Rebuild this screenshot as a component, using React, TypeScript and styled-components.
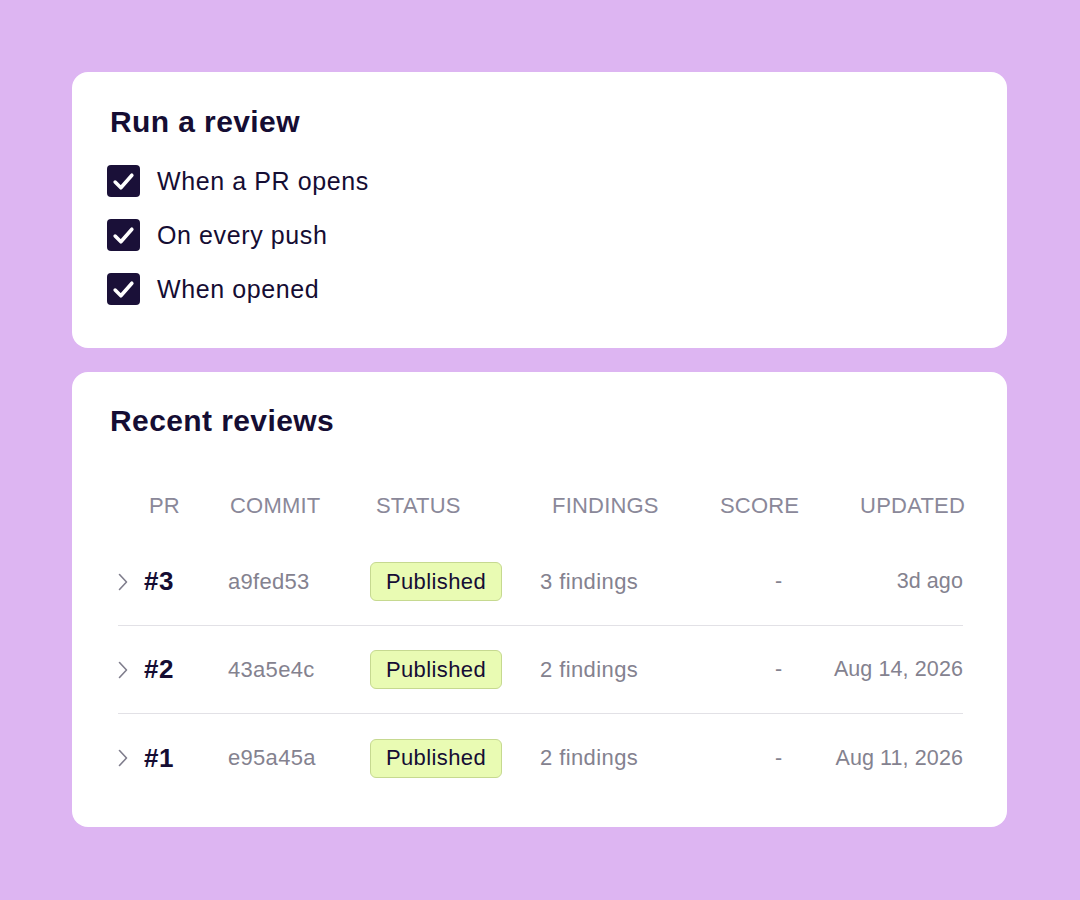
import React from "react";
import styled, { createGlobalStyle } from "styled-components";

const Global = createGlobalStyle`
  html, body { margin: 0; padding: 0; }
  body {
    background: #ddb5f2;
    font-family: "Liberation Sans", Arial, sans-serif;
    color: #150d33;
    -webkit-font-smoothing: antialiased;
  }
`;

const Page = styled.div`
  display: flex;
  flex-direction: column;
  gap: 24px;
  padding: 72px 73px 72px 72px;
  width: 1080px;
  height: 900px;
  box-sizing: border-box;
`;

const Card = styled.section<{ $h: number; $pt: number }>`
  background: #ffffff;
  border-radius: 16px;
  height: ${(p) => p.$h}px;
  box-sizing: border-box;
  padding: ${(p) => p.$pt}px 38px 0 38px;
  display: flex;
  flex-direction: column;
`;

const Title = styled.h2`
  margin: 0;
  font-size: 30px;
  line-height: 36px;
  font-weight: 700;
  letter-spacing: 0.4px;
  color: #150d33;
`;

const CheckList = styled.div`
  display: flex;
  flex-direction: column;
  gap: 22px;
  margin-top: 25px;
`;

const CheckRow = styled.label`
  display: flex;
  align-items: center;
  gap: 17px;
  margin-left: -3px;
  font-size: 25px;
  line-height: 32px;
  letter-spacing: 0.6px;
  color: #150d33;
`;

const Box = styled.span`
  width: 33px;
  height: 32px;
  border-radius: 4px;
  background: #1a1038;
  display: flex;
  align-items: center;
  justify-content: center;
  flex: none;
`;

const Table = styled.div`
  margin: 51px 6px 0 8px;
  display: flex;
  flex-direction: column;
`;

const cols = "110px 142px 170px 178px 100px 1fr";

const HeadRow = styled.div`
  display: grid;
  grid-template-columns: ${cols};
  height: 48px;
  align-items: start;
`;

const Th = styled.div<{ $pl?: number; $right?: boolean }>`
  padding-left: ${(p) => p.$pl ?? 0}px;
  text-align: ${(p) => (p.$right ? "right" : "left")};
  margin-right: ${(p) => (p.$right ? -2 : 0)}px;
  font-size: 22px;
  line-height: 32px;
  letter-spacing: 0.2px;
  color: #8a8899;
  white-space: nowrap;
`;

const Row = styled.div<{ $last?: boolean }>`
  display: grid;
  grid-template-columns: ${cols};
  height: 88px;
  align-items: center;
  border-bottom: ${(p) => (p.$last ? "none" : "1.5px solid #e2e1e6")};
  box-sizing: border-box;
`;

const PrCell = styled.div`
  display: flex;
  align-items: center;
  gap: 15px;
  margin-left: -1px;
`;

const PrNum = styled.span`
  font-size: 26px;
  font-weight: 700;
  letter-spacing: 0.6px;
  color: #150d33;
`;

const Muted = styled.div<{ $size?: number; $ls?: number; $right?: boolean; $pl?: number }>`
  font-size: ${(p) => p.$size ?? 21.5}px;
  letter-spacing: ${(p) => p.$ls ?? 0.1}px;
  color: #84828f;
  white-space: nowrap;
  text-align: ${(p) => (p.$right ? "right" : "left")};
  padding-left: ${(p) => p.$pl ?? 0}px;
`;

const Badge = styled.span`
  display: inline-flex;
  align-items: center;
  justify-content: center;
  width: 132px;
  height: 39px;
  box-sizing: border-box;
  background: #e9fbb3;
  border: 1.5px solid #c6d990;
  border-radius: 6px;
  font-size: 22px;
  letter-spacing: 0.4px;
  color: #150d33;
`;

const Check = () => (
  <svg width="23" height="21" viewBox="0 0 22 20" fill="none">
    <path d="M3 10.5 L8.5 16 L19 4" stroke="#fff" strokeWidth="3.4" strokeLinecap="round" strokeLinejoin="round" />
  </svg>
);

const Chevron = () => (
  <svg width="12" height="20" viewBox="0 0 12 20" fill="none">
    <path d="M2.5 2.5 L9.5 10 L2.5 17.5" stroke="#7f7d8c" strokeWidth="1.6" strokeLinecap="round" strokeLinejoin="round" />
  </svg>
);

const triggers = ["When a PR opens", "On every push", "When opened"];

const reviews = [
  { pr: "#3", commit: "a9fed53", findings: "3 findings", updated: "3d ago" },
  { pr: "#2", commit: "43a5e4c", findings: "2 findings", updated: "Aug 14, 2026" },
  { pr: "#1", commit: "e95a45a", findings: "2 findings", updated: "Aug 11, 2026" },
];

export default function App() {
  return (
    <>
      <Global />
      <Page>
        <Card $h={276} $pt={32}>
          <Title>Run a review</Title>
          <CheckList>
            {triggers.map((t) => (
              <CheckRow key={t}>
                <Box>
                  <Check />
                </Box>
                {t}
              </CheckRow>
            ))}
          </CheckList>
        </Card>
        <Card $h={455} $pt={31}>
          <Title>Recent reviews</Title>
          <Table>
            <HeadRow>
              <Th $pl={31}>PR</Th>
              <Th $pl={2}>COMMIT</Th>
              <Th $pl={6}>STATUS</Th>
              <Th $pl={12}>FINDINGS</Th>
              <Th $pl={2}>SCORE</Th>
              <Th $right>UPDATED</Th>
            </HeadRow>
            {reviews.map((r, i) => (
              <Row key={r.pr} $last={i === reviews.length - 1}>
                <PrCell>
                  <Chevron />
                  <PrNum>{r.pr}</PrNum>
                </PrCell>
                <Muted $size={22} $ls={0.3}>{r.commit}</Muted>
                <div>
                  <Badge>Published</Badge>
                </div>
                <Muted $size={22} $ls={0.4}>{r.findings}</Muted>
                <Muted $pl={57}>-</Muted>
                <Muted $right>{r.updated}</Muted>
              </Row>
            ))}
          </Table>
        </Card>
      </Page>
    </>
  );
}
